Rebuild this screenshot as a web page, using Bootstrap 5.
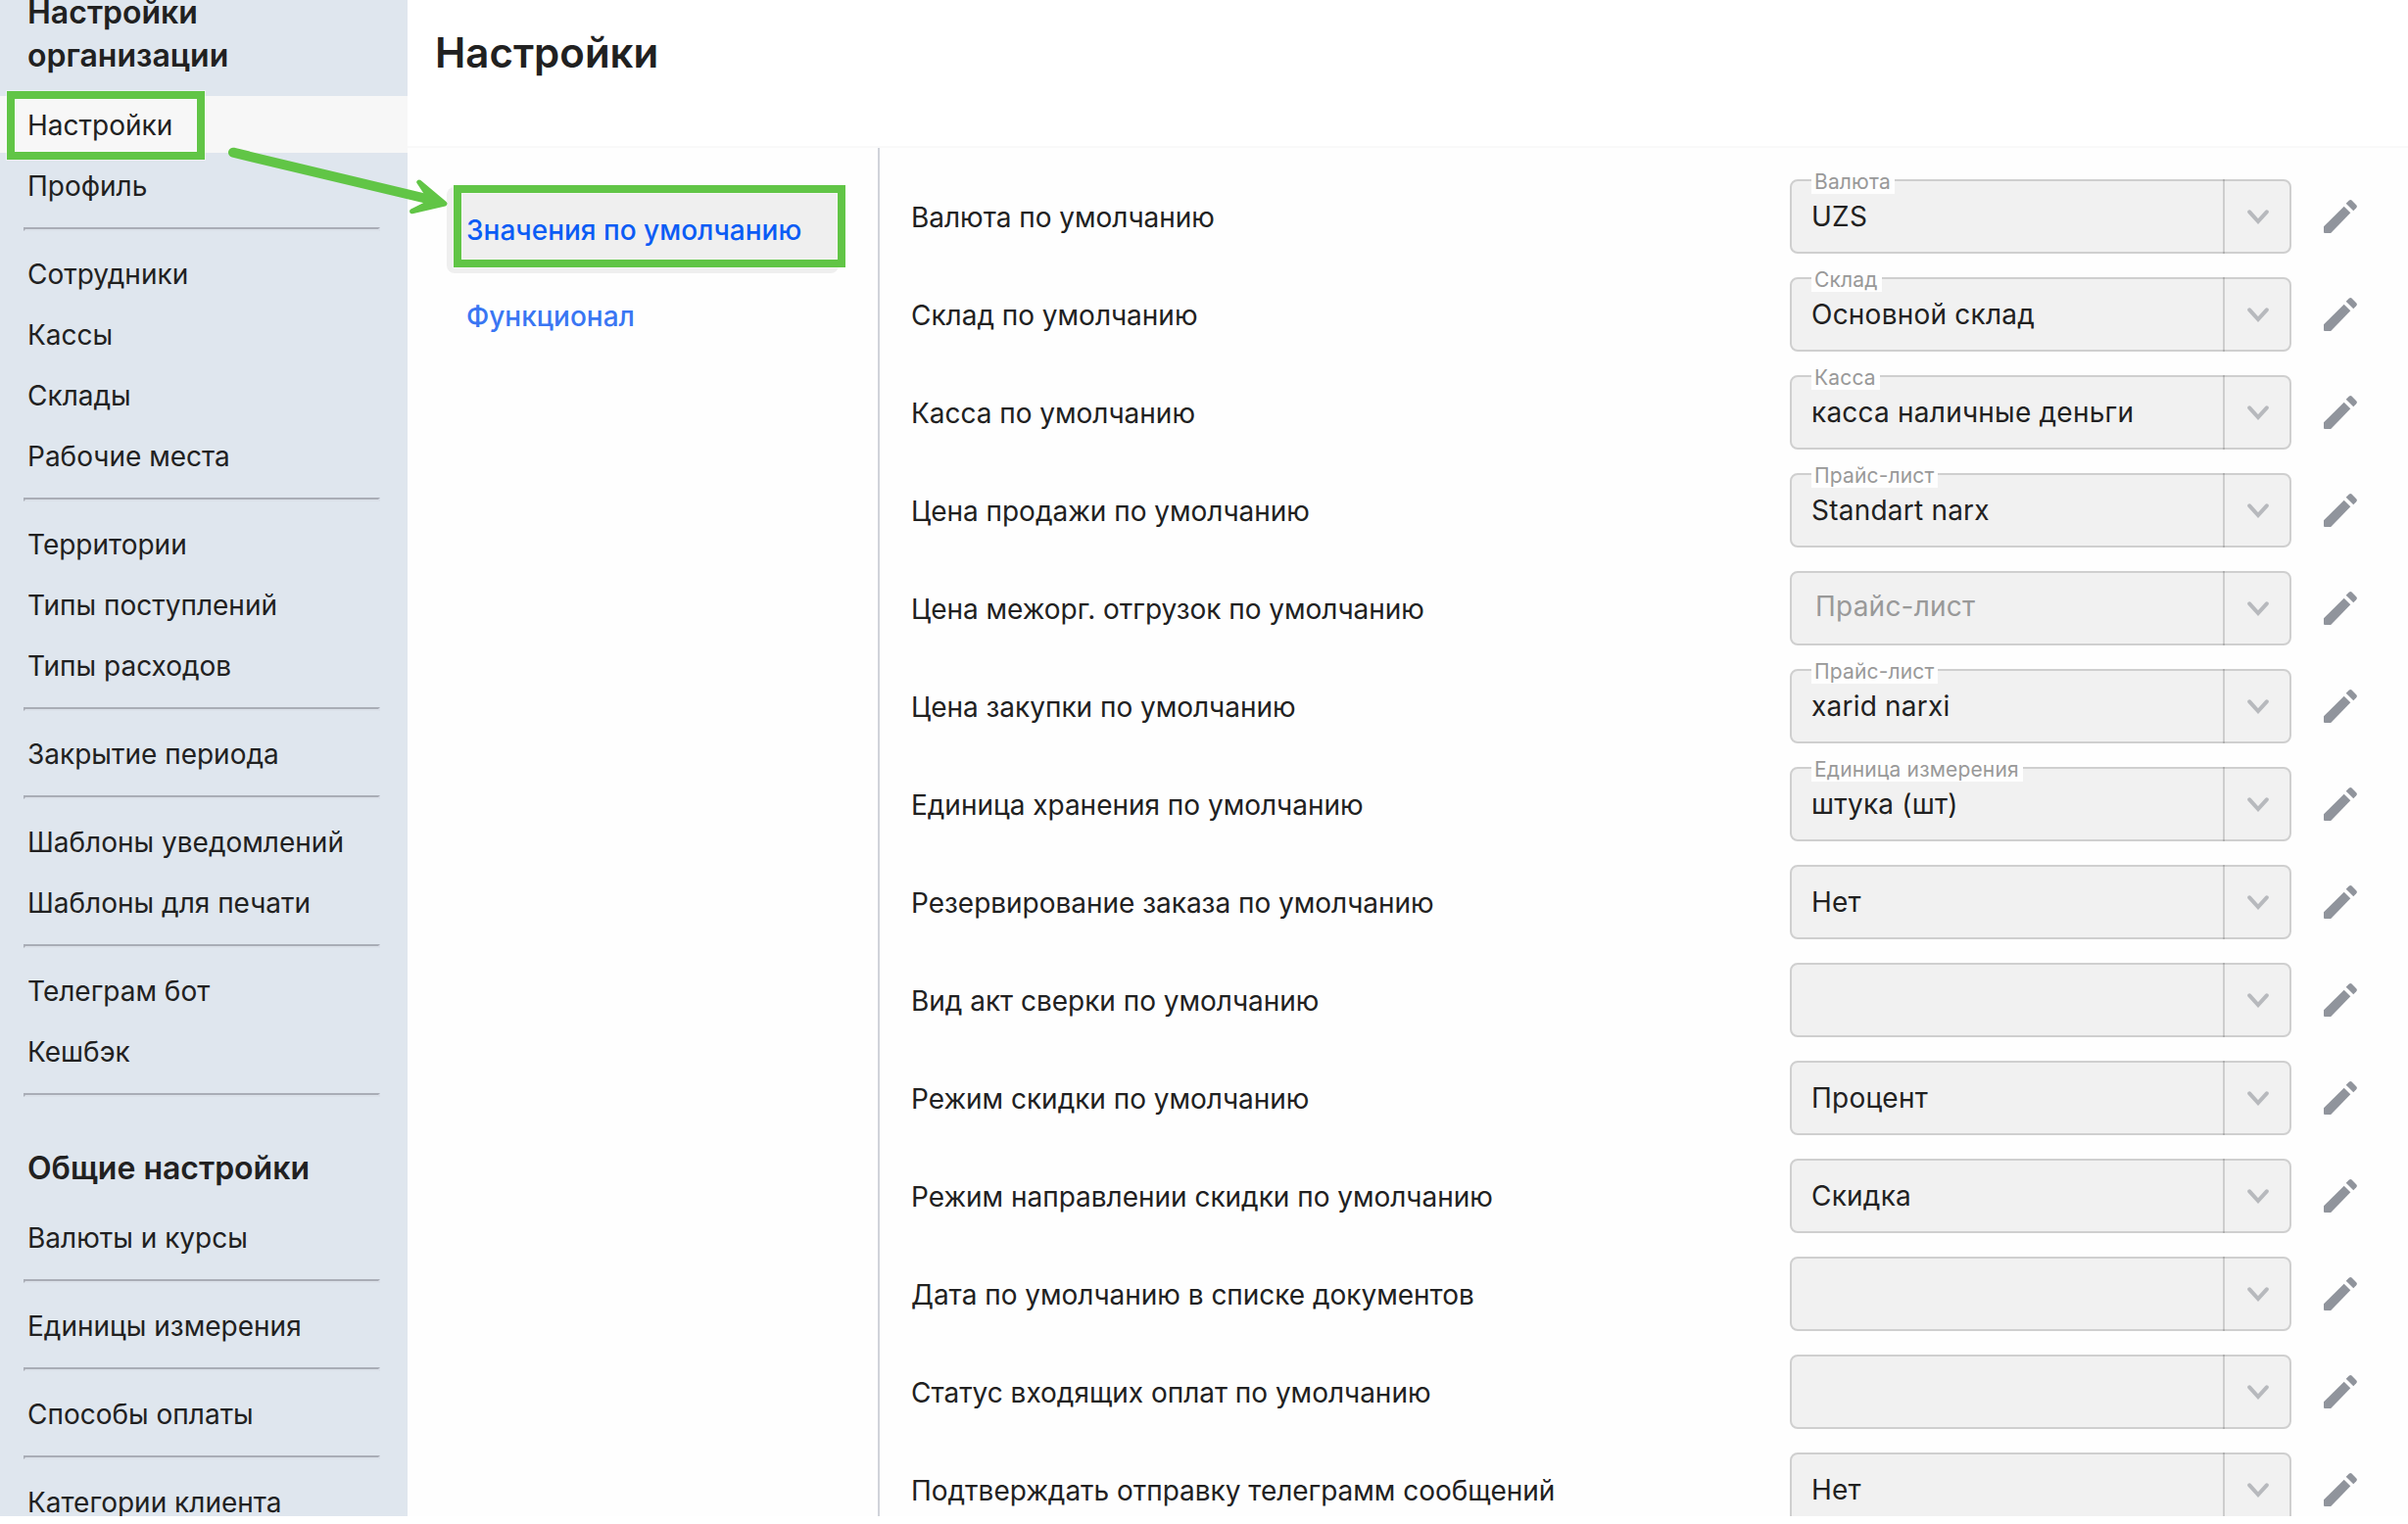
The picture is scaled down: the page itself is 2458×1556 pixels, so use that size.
<!DOCTYPE html>
<html lang="ru">
<head>
<meta charset="utf-8">
<meta name="viewport" content="width=device-width, initial-scale=1">
<title>Настройки</title>
<link href="https://cdn.jsdelivr.net/npm/bootstrap@5.3.0/dist/css/bootstrap.min.css" rel="stylesheet">
<style>
body{font-family:Inter,"Liberation Sans",sans-serif;font-size:28px;line-height:34px;color:#212121;background:#fff}
.page{height:1548px}
.side{width:416px;background:#dfe6ee}
.side-inner{margin-top:-9px}
.side-title{font-size:32px;line-height:44px;font-weight:600;margin:0 0 19px;padding:0 28px}
.side-title.second{margin-top:37px}
.side .nav-link{color:#212121;height:58px;line-height:60px;padding:0 28px;margin-bottom:4px;white-space:nowrap}
.side .nav-link.active{background:#f7f7f7}
.side .nav-link.last{margin-bottom:0}
.side hr{margin:14px 28px 14px 24px;height:4px;opacity:1;border:2px solid;border-color:#a9adb6 #d9dee7 #dbe1e9 #a9adb6;flex-shrink:0}
.main-area{background:#fefefe}
.head{height:151px;padding:29px 28px 0;background:#fff;border-bottom:2px solid #f9f9f9}
.head h1{font-size:42px;line-height:50px;font-weight:600;margin:0}
.tabs{width:482px;padding:40px 40px 0;border-right:2px solid #d0d3da}
.tabs .nav-link{height:88px;line-height:88px;padding:0 20px;border-radius:8px;font-weight:500;color:#3a76f3}
.tabs .nav-link.active{background:#efefef;color:#0b5cf5}
.opts{padding:32px 40px 0 32px}
.opt{height:76px;margin-bottom:24px;flex-shrink:0}
.opt-name{padding-top:2px;letter-spacing:-.02px}
.field{width:512px;height:76px;border:2px solid #cfcfcf;border-radius:8px;background:#f1f1f1;letter-spacing:.22px}
.field-value{padding-left:20px}
.field-hint{padding:0 0 4px 24px;color:#999}
.field-label{left:20px;top:-12px;height:25px;line-height:26px;padding:0 4px 0 3px;font-size:21px;letter-spacing:.16px;color:#999;background:#fefefe;white-space:nowrap}
.field-arrow{width:70px;margin:-2px -2px -2px 0;padding-top:1px;border-left:2px solid rgba(0,0,0,.15)}
.pencil{margin-left:33px;margin-right:12px}
.frame{position:absolute;border:8px solid #61c546;box-shadow:0 0 0 1px rgba(255,255,255,.45),inset 0 0 0 1px rgba(255,255,255,.45)}
.frame-menu{left:7px;top:93px;width:202px;height:70px}
.frame-tab{left:463px;top:189px;width:400px;height:84px}
.pointer{position:absolute;left:226px;top:143px}
</style>
</head>
<body>
<div class="page d-flex overflow-hidden position-relative">
  <aside class="side flex-shrink-0 overflow-hidden">
    <div class="side-inner">
      <h2 class="side-title">Настройки организации</h2>
      <nav class="nav flex-column flex-nowrap" id="orgNav"></nav>
      <h2 class="side-title second">Общие настройки</h2>
      <nav class="nav flex-column flex-nowrap" id="commonNav"></nav>
    </div>
  </aside>
  <main class="main-area flex-grow-1 d-flex flex-column">
    <header class="head flex-shrink-0"><h1>Настройки</h1></header>
    <div class="d-flex flex-grow-1 overflow-hidden">
      <nav class="tabs nav flex-column flex-nowrap flex-shrink-0">
        <a class="nav-link active">Значения по умолчанию</a>
        <a class="nav-link">Функционал</a>
      </nav>
      <section class="opts d-flex flex-column flex-grow-1" id="opts"></section>
    </div>
  </main>
  <div class="frame frame-menu"></div>
  <div class="frame frame-tab"></div>
  <svg class="pointer" width="236" height="82" viewBox="226 143 236 82">
    <path d="M238 155.700 L436 203" stroke="#61c546" stroke-width="10" stroke-linecap="round"/>
    <path d="M427.800 186 L454 208 L420.500 215.800 L435 208.500 L437 200Z" fill="#61c546" stroke="#61c546" stroke-width="5" stroke-linejoin="round"/>
  </svg>
</div>
<script src="https://cdn.jsdelivr.net/npm/bootstrap@5.3.0/dist/js/bootstrap.bundle.min.js"></script>
<script>
const groups = (list, tail) => list.map(g => g.map((t, i) =>
  `<a class="nav-link${t === 'Настройки' ? ' active' : ''}${i === g.length - 1 ? ' last' : ''}">${t}</a>`).join('')).join('<hr>') + (tail ? '<hr>' : '');
orgNav.innerHTML = groups([
  ['Настройки', 'Профиль'],
  ['Сотрудники', 'Кассы', 'Склады', 'Рабочие места'],
  ['Территории', 'Типы поступлений', 'Типы расходов'],
  ['Закрытие периода'],
  ['Шаблоны уведомлений', 'Шаблоны для печати'],
  ['Телеграм бот', 'Кешбэк']
], true);
commonNav.innerHTML = groups([['Валюты и курсы'], ['Единицы измерения'], ['Способы оплаты'], ['Категории клиента']], false);

const rows = [
  ['Валюта по умолчанию', 'UZS', 'Валюта'],
  ['Склад по умолчанию', 'Основной склад', 'Склад'],
  ['Касса по умолчанию', 'касса наличные деньги', 'Касса'],
  ['Цена продажи по умолчанию', 'Standart narx', 'Прайс-лист'],
  ['Цена межорг. отгрузок по умолчанию', '', 'Прайс-лист'],
  ['Цена закупки по умолчанию', 'xarid narxi', 'Прайс-лист'],
  ['Единица хранения по умолчанию', 'штука (шт)', 'Единица измерения'],
  ['Резервирование заказа по умолчанию', 'Нет', ''],
  ['Вид акт сверки по умолчанию', '', ''],
  ['Режим скидки по умолчанию', 'Процент', ''],
  ['Режим направлении скидки по умолчанию', 'Скидка', ''],
  ['Дата по умолчанию в списке документов', '', ''],
  ['Статус входящих оплат по умолчанию', '', ''],
  ['Подтверждать отправку телеграмм сообщений', 'Нет', '']
];
opts.innerHTML = rows.map(([name, value, label]) => `
  <div class="opt d-flex align-items-center">
    <div class="opt-name flex-grow-1">${name}</div>
    <div class="field d-flex align-items-center position-relative flex-shrink-0">
      ${label && value ? `<span class="field-label position-absolute">${label}</span>` : ''}
      ${value ? `<div class="field-value flex-grow-1">${value}</div>` : `<div class="field-hint flex-grow-1">${label}</div>`}
      <div class="field-arrow d-flex align-items-center justify-content-center align-self-stretch flex-shrink-0">
        <svg width="22" height="16" viewBox="0 0 22 16"><path d="M2.200 2.300 L11 12 L19.800 2.300" fill="none" stroke="#b7b9bd" stroke-width="4" stroke-linecap="round" stroke-linejoin="miter"/></svg>
      </div>
    </div>
    <svg class="pencil flex-shrink-0" width="34" height="34" viewBox="0 0 34 34" fill="#90949c"><path d="M0 27.300 L20.700 6.700 L27.300 13.300 L7.700 33.500 Q7.200 34 6.500 34 H1 Q0 34 0 33Z"/><path d="M22.700 3.800 L25.700 .8 Q27.300 -.6 28.800 .8 L33.200 5.200 Q34.600 6.700 33.200 8.300 L30.300 11.300Z"/></svg>
  </div>`).join('');
</script>
</body>
</html>
